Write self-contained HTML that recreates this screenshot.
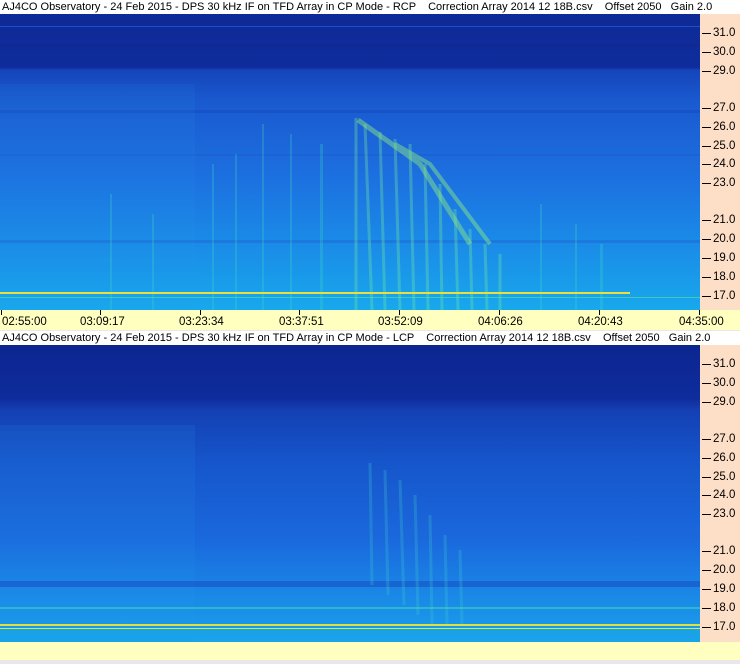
<!DOCTYPE html>
<html><head><style>
body{margin:0;width:740px;height:664px;overflow:hidden;background:#e8e8ec;font-family:"Liberation Sans",sans-serif;font-size:12px;color:#000;position:relative}
.t{position:absolute;left:0;width:740px;height:14px;background:#fff;white-space:pre;line-height:14px;padding-left:2px;box-sizing:border-box;font-size:11px;overflow:hidden}
.ax{position:absolute;left:700px;width:40px;background:#fddfc8}
.ax div{position:absolute;left:0;width:40px;height:14px;line-height:14px;font-size:11.5px}
.ax div:before{content:"";position:absolute;left:2px;top:7px;width:9px;height:1px;background:#000}
.ax span{position:absolute;left:13px}
.tb{position:absolute;left:0;width:740px;background:#ffffc0;font-size:11.5px}
.tb span{position:absolute;top:6px}
.tb i{position:absolute;top:0;width:1px;height:5px;background:#000}
svg{position:absolute;left:0}
</style></head><body>
<div class="t" style="top:0">AJ4CO Observatory - 24 Feb 2015 - DPS 30 kHz IF on TFD Array in CP Mode - RCP    Correction Array 2014 12 18B.csv    Offset 2050   Gain 2.0</div>
<svg style="top:14px" width="700" height="296">
<defs><linearGradient id="g1" x1="0" y1="0" x2="0" y2="1">
<stop offset="0" stop-color="#0d2a96"/><stop offset="0.18" stop-color="#0f2c9c"/><stop offset="0.19" stop-color="#1545bb"/><stop offset="0.3" stop-color="#1a5ad0"/><stop offset="0.55" stop-color="#1c70e0"/><stop offset="0.8" stop-color="#1a8ee8"/><stop offset="1" stop-color="#18a8ec"/></linearGradient></defs>
<rect width="700" height="296" fill="url(#g1)"/>
<rect y="12" width="700" height="1" fill="#1e4ec8"/><rect y="30" width="700" height="2" fill="#102890"/>
<rect y="96" width="700" height="3" fill="#1548c0" opacity=".5"/><rect y="140" width="700" height="2" fill="#1b5ad0" opacity=".5"/><rect y="226" width="700" height="3" fill="#1b68d4" opacity=".5"/>
<rect x="0" y="70" width="195" height="226" fill="#2aa0f0" opacity=".1"/>
<g fill="#40e0c0" opacity=".25">
<rect x="110" y="180" width="2" height="116"/><rect x="212" y="150" width="2" height="146"/><rect x="235" y="140" width="2" height="156"/><rect x="262" y="110" width="2" height="186"/><rect x="290" y="120" width="2" height="176"/><rect x="320" y="130" width="3" height="166"/><rect x="152" y="200" width="2" height="96"/><rect x="540" y="190" width="2" height="106"/><rect x="600" y="230" width="3" height="66"/><rect x="575" y="210" width="2" height="86"/>
</g>
<g stroke="#70e8a0" fill="none" opacity=".35" stroke-width="3">
<path d="M356 104 L356 296"/><path d="M365 110 L372 296"/><path d="M380 118 L385 296"/><path d="M395 125 L400 296"/><path d="M410 130 L414 296"/><path d="M425 150 L428 296"/><path d="M440 170 L442 296"/><path d="M455 195 L458 296"/><path d="M470 215 L472 296"/><path d="M485 230 L487 296"/><path d="M500 240 L500 296"/>
</g>
<g stroke="#90f080" fill="none" opacity=".45">
<path d="M358 106 L420 150 L470 230" stroke-width="5"/>
<path d="M395 130 L430 150 L490 230" stroke-width="4"/>
</g>
<rect y="278" width="630" height="2" fill="#e8e040"/><rect y="283" width="700" height="1" fill="#60e090" opacity=".6"/>
</svg>
<div class="ax" style="top:14px;height:296px">
<div style="top:12px"><span>31.0</span></div><div style="top:31px"><span>30.0</span></div><div style="top:50px"><span>29.0</span></div><div style="top:87px"><span>27.0</span></div><div style="top:106px"><span>26.0</span></div><div style="top:125px"><span>25.0</span></div><div style="top:143px"><span>24.0</span></div><div style="top:162px"><span>23.0</span></div><div style="top:199px"><span>21.0</span></div><div style="top:218px"><span>20.0</span></div><div style="top:237px"><span>19.0</span></div><div style="top:256px"><span>18.0</span></div><div style="top:275px"><span>17.0</span></div></div>
<div class="tb" style="top:310px;height:20px">
<i style="left:1px"></i><i style="left:100px"></i><i style="left:200px"></i><i style="left:299px"></i><i style="left:399px"></i><i style="left:499px"></i><i style="left:599px"></i><i style="left:699px"></i>
<span style="left:2px">02:55:00</span><span style="left:80px">03:09:17</span><span style="left:179px">03:23:34</span><span style="left:279px">03:37:51</span><span style="left:378px">03:52:09</span><span style="left:478px">04:06:26</span><span style="left:578px">04:20:43</span><span style="left:679px">04:35:00</span></div>
<div class="t" style="top:331px">AJ4CO Observatory - 24 Feb 2015 - DPS 30 kHz IF on TFD Array in CP Mode - LCP    Correction Array 2014 12 18B.csv    Offset 2050   Gain 2.0</div>
<svg style="top:345px" width="700" height="297">
<defs><linearGradient id="g2" x1="0" y1="0" x2="0" y2="1">
<stop offset="0" stop-color="#0c2690"/><stop offset="0.18" stop-color="#0f2c9c"/><stop offset="0.22" stop-color="#1440b4"/><stop offset="0.4" stop-color="#1656cc"/><stop offset="0.65" stop-color="#1a68dc"/><stop offset="0.82" stop-color="#1a84e6"/><stop offset="1" stop-color="#1aa0ea"/></linearGradient></defs>
<rect width="700" height="297" fill="url(#g2)"/>
<rect x="0" y="80" width="195" height="217" fill="#2aa0f0" opacity=".12"/>
<rect y="236" width="700" height="6" fill="#1548c0" opacity=".5"/>
<g stroke="#40d0d0" fill="none" opacity=".25" stroke-width="3">
<path d="M370 118 L372 240"/><path d="M385 125 L388 250"/><path d="M400 135 L404 260"/><path d="M415 150 L418 270"/><path d="M430 170 L432 280"/><path d="M445 190 L447 280"/><path d="M460 205 L462 280"/>
</g>
<rect y="262" width="700" height="2" fill="#40e0b0" opacity=".5"/>
<rect y="279" width="700" height="2" fill="#e0e040"/><rect y="283" width="700" height="1" fill="#c8f050"/>
<rect x="0" y="284" width="700" height="13" fill="#1aa8e8" opacity=".5"/>
</svg>
<div class="ax" style="top:345px;height:297px">
<div style="top:12px"><span>31.0</span></div><div style="top:31px"><span>30.0</span></div><div style="top:50px"><span>29.0</span></div><div style="top:87px"><span>27.0</span></div><div style="top:106px"><span>26.0</span></div><div style="top:125px"><span>25.0</span></div><div style="top:143px"><span>24.0</span></div><div style="top:162px"><span>23.0</span></div><div style="top:199px"><span>21.0</span></div><div style="top:218px"><span>20.0</span></div><div style="top:237px"><span>19.0</span></div><div style="top:256px"><span>18.0</span></div><div style="top:275px"><span>17.0</span></div></div>
<div class="tb" style="top:642px;height:18px"></div>
</body></html>
